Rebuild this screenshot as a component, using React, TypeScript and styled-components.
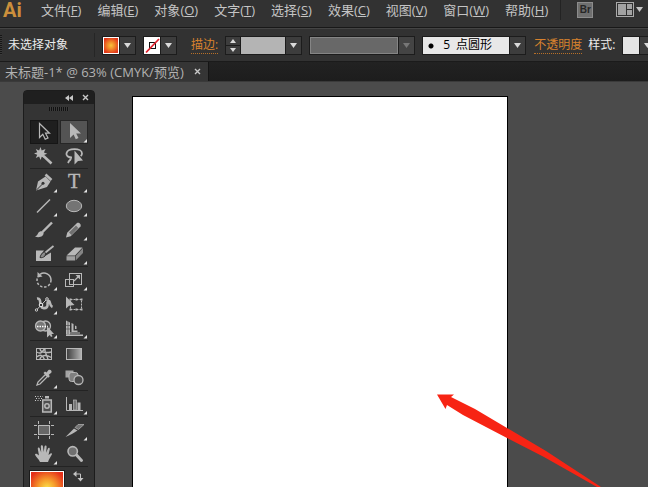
import React from "react";
import styled, { createGlobalStyle, css } from "styled-components";

const GlobalStyle = createGlobalStyle`
  * { box-sizing: border-box; }
  body {
    margin: 0;
    background: #4b4b4b;
    font-family: "Open Sans", "Noto Sans CJK SC", sans-serif;
    color: #c4c4c4;
  }
  button, input, select {
    font: inherit;
    color: inherit;
    margin: 0;
    padding: 0;
    border: 0;
    border-radius: 0;
    background: none;
  }
`;

const Shell = styled.div`
  display: flex;
  flex-direction: column;
  height: 100vh;
  overflow: hidden;
`;

/* ---------- menu bar ---------- */

const MenuBar = styled.header`
  display: flex;
  flex: none;
  align-items: center;
  height: 28px;
  padding-bottom: 8px;
  background: #323232;
  border-bottom: 1px solid #181818;
  white-space: nowrap;
`;

const Logo = styled.span`
  flex: none;
  width: 41px;
  padding-left: 3px;
  font: 700 20px/20px Roboto, sans-serif;
  color: #cb8f3c;
`;

const Menus = styled.nav`
  display: flex;
  flex: none;
  gap: 16px;
`;

const MenuButton = styled.button`
  font-size: 13px;
  line-height: 20px;
`;

const MenuTools = styled.div`
  display: flex;
  flex: none;
  align-items: center;
  gap: 23px;
  margin-left: 12px;
  padding-left: 16px;
  border-left: 1px solid #232323;
  height: 20px;
`;

const BridgeButton = styled.button`
  width: 16px;
  height: 16px;
  background: #6f6f6f;
  border: 1px solid #8c8c8c;
  color: #262626;
  font: 700 10px/12px "Liberation Sans", sans-serif;
`;

const IconButton = styled.button`
  display: flex;
  align-items: center;
  gap: 2px;
`;

/* ---------- control bar ---------- */

const ControlBar = styled.div`
  display: flex;
  flex: none;
  align-items: center;
  height: 34px;
  background: #323232;
  border-top: 1px solid #444;
  border-bottom: 1px solid #1b1b1b;
  font-size: 12px;
  line-height: 16px;
  white-space: nowrap;
  overflow: hidden;
  & > * {
    flex: none;
  }
`;

const Grip = styled.span`
  width: 2px;
  height: 20px;
  margin-right: 6px;
  background: repeating-linear-gradient(#161616 0 1px, #3a3a3a 1px 2px);
`;

const Status = styled.span`
  width: 86px;
  color: #ececec;
`;

const Group = styled.div`
  display: flex;
  align-items: stretch;
  height: 19px;
  margin-left: 7px;
  border: 1px solid #1c1c1c;
`;

const Divider = styled.span`
  width: 1px;
  height: 24px;
  background: #262626;
`;

const Swatch = styled.button<{ $kind: "fill" | "none" | "plain" }>`
  display: flex;
  width: 16px;
  ${(p) =>
    p.$kind === "fill"
      ? css`
          border: 1px solid #fff;
          background: radial-gradient(circle, #f9c13a 0, #f08a28 35%, #e3391b 80%);
        `
      : css`
          background: ${p.$kind === "none" ? "#fff" : "#e4e4e4"};
        `}
`;

const Arrow = styled.button<{ $dim?: boolean }>`
  display: flex;
  flex: none;
  align-items: center;
  justify-content: center;
  width: 16px;
  background: ${(p) => (p.$dim ? "#444" : "#3d3d3d")};
  border-left: 1px solid #1c1c1c;
  color: ${(p) => (p.$dim ? "#777" : "#dadada")};
`;

const Link = styled.a<{ $gap: number }>`
  margin-left: ${(p) => p.$gap}px;
  color: #d8822e;
  text-decoration: none;
  border-bottom: 1px dotted #b87028;
`;

const Spinner = styled.div`
  display: flex;
  flex-direction: column;
  width: 15px;
  background: #3d3d3d;
  border-right: 1px solid #1c1c1c;
  color: #dadada;
`;

const SpinButton = styled.button`
  display: flex;
  flex: 1;
  align-items: center;
  justify-content: center;
  & + & {
    border-top: 1px solid #1c1c1c;
  }
`;

const WeightInput = styled.input`
  width: 44px;
  background: #b4b4b4;
  color: #111;
`;

const ProfileSelect = styled.select`
  appearance: none;
  width: 88px;
  background: #686868;
  border: 1px solid #858585;
  opacity: 1;
`;

const BrushSelect = styled.select`
  appearance: none;
  width: 86px;
  padding-left: 20px;
  background: radial-gradient(circle at 8px 9px, #000 0 2px, #e8e8e8 3px);
  color: #000;
`;

const Label = styled.label`
  margin-left: 6px;
  color: #ececec;
`;

/* ---------- document tabs ---------- */

const Tabs = styled.div`
  display: flex;
  flex: none;
  height: 20px;
  background: linear-gradient(#222, #1d1d1d);
  border-bottom: 1px solid #3a3a3a;
`;

const Tab = styled.div`
  display: flex;
  align-items: center;
  gap: 10px;
  padding: 0 7px 0 5px;
  background: #353535;
  border-right: 1px solid #151515;
  font-size: 13px;
  line-height: 18px;
  color: #b2b2b2;
  white-space: nowrap;
`;

const CloseButton = styled.button`
  display: flex;
  color: #c8c8c8;
`;

/* ---------- workspace ---------- */

const Workspace = styled.main`
  position: relative;
  display: flex;
  flex: 1;
  min-height: 0;
  padding-left: 23px;
  background: #4b4b4b;
`;

const Artboard = styled.section`
  flex: 1;
  margin: 14px 140px 0 37px;
  background: #fff;
  border: 1px solid #000;
  border-bottom: 0;
`;

const Pointer = styled.svg`
  position: absolute;
  left: 436px;
  top: 312px;
`;

const Panel = styled.aside`
  flex: none;
  width: 72px;
  height: 480px;
  margin-top: 8px;
  background: #343434;
  border: 1px solid #1c1c1c;
  border-radius: 4px 4px 0 0;
`;

const PanelHead = styled.div`
  display: flex;
  align-items: center;
  justify-content: flex-end;
  gap: 9px;
  height: 13px;
  padding-right: 5px;
  background: #1f1f1f;
  color: #c4c4c4;
`;

const PanelGrip = styled.div`
  width: 20px;
  height: 4px;
  margin: 3px auto 9px;
  background: repeating-linear-gradient(90deg, #111 0 1px, #3a3a3a 1px 2px);
`;

const ToolGroup = styled.div`
  display: grid;
  grid-template-columns: 28px 28px;
  grid-auto-rows: 24px;
  column-gap: 2px;
  margin: 0 6px;
  & + & {
    border-top: 1px solid #232323;
    padding-top: 1px;
  }
`;

const ToolButton = styled.button<{ $state?: "active" | "hover" }>`
  display: flex;
  color: #b8b8b8;
  ${(p) =>
    p.$state === "active" &&
    css`
      background: #1f1f1f;
      box-shadow: inset 0 0 0 1px #161616;
    `}
  ${(p) =>
    p.$state === "hover" &&
    css`
      background: #545454;
      box-shadow: inset 0 0 0 1px #262626;
    `}
`;

const ColorArea = styled.div`
  display: flex;
  align-items: flex-start;
  gap: 9px;
  margin: 0 6px;
  padding-top: 4px;
  border-top: 1px solid #232323;
`;

const FillButton = styled.button`
  width: 34px;
  height: 34px;
  border: 1px solid #fff;
  outline: 1px solid #1c1c1c;
  background: radial-gradient(circle, #fae04a 0, #f6a02c 35%, #e5301a 85%);
`;

const Down = () => (
  <svg width="7" height="5" aria-hidden="true">
    <path d="M0 0h7L3.500 5z" fill="currentColor" />
  </svg>
);

const Cross = () => (
  <svg width="7" height="7" aria-hidden="true">
    <path d="M1 1l5 5M6 1L1 6" stroke="currentColor" strokeWidth="1.400" />
  </svg>
);

const line = { fill: "none", stroke: "currentColor" } as const;
const solid = { fill: "currentColor" } as const;

type Tool = { name: string; art: React.ReactNode; more?: boolean; state?: "active" | "hover" };

const groups: Tool[][] = [
  [
    {
      name: "选择工具",
      state: "active",
      art: <path d="M9.500 3.500v14l3.300-3.200 2.400 5 2.800-1.300-2.500-4.800h4z" {...line} strokeWidth="1.200" />,
    },
    {
      name: "直接选择工具",
      state: "hover",
      more: true,
      art: <path d="M10 3v15l3.600-3.500 2.200 4.800 2.700-1.200-2.300-4.600H21z" {...solid} />,
    },
    {
      name: "魔棒工具",
      art: (
        <>
          <path d="M10.500 3l1.200 3.600L15.500 5l-1.600 3.400 3.400 1.300-3.400 1.200L15 14l-3.300-1.300L10.600 16l-1.500-3.400L5.800 14l1.400-3.300L4 9.500l3.300-1.300L5.800 5l3.300 1.400z" {...solid} />
          <path d="M13.500 12l8 7.500" {...line} strokeWidth="2.600" />
        </>
      ),
    },
    {
      name: "套索工具",
      art: (
        <>
          <path d="M12 13.500c-4 0-6-2-5.500-4.300.6-2.400 4-4 8-4 4.200 0 7.500 1.600 7.500 4.200 0 1-.5 2-1.300 2.700M9.500 12.500c2 1.500 1.500 3-.5 4.500l-1 2" {...line} strokeWidth="1.800" />
          <path d="M14.500 6.500v14l3.500-3.500 5-.5z" {...solid} />
        </>
      ),
    },
  ],
  [
    {
      name: "钢笔工具",
      more: true,
      art: (
        <>
          <path d="M6 20.500l2-9 7.500-5 5 5-3.500 5.500z" {...solid} />
          <path d="M6.500 20l6-6" stroke="#343434" />
          <circle cx="13" cy="13.300" r="1.500" fill="#343434" />
          <path d="M15.500 4.500l6 5.500" {...line} strokeWidth="2.500" />
        </>
      ),
    },
    {
      name: "文字工具",
      more: true,
      art: (
        <text x="14" y="18" textAnchor="middle" fontFamily="Liberation Serif, serif" fontSize="20" {...solid} stroke="currentColor" strokeWidth=".4">
          T
        </text>
      ),
    },
    { name: "直线段工具", more: true, art: <path d="M7 18.500L20 5.500" {...line} strokeWidth="1.400" /> },
    {
      name: "椭圆工具",
      more: true,
      art: <ellipse cx="14" cy="12" rx="7.700" ry="5.700" fill="#747474" stroke="currentColor" />,
    },
    {
      name: "画笔工具",
      art: (
        <>
          <path d="M12.500 14L22 4.500" {...line} strokeWidth="2.400" />
          <path d="M13.500 14.500c.8 3.500-4 6-8.500 4 3-.6 2.500-4.500 5.500-5.200 1.300-.3 2.500.2 3 1.200z" {...solid} />
        </>
      ),
    },
    {
      name: "铅笔工具",
      more: true,
      art: (
        <>
          <path d="M6 19.500l1.200-4.700L17 5c2-1 4.500 1.200 3.500 3.500l-9.800 9.700z" {...solid} />
          <path d="M9 14.500l7-7 2.300 2.500-6.800 7z" fill="#707070" />
        </>
      ),
    },
    {
      name: "斑点画笔工具",
      art: (
        <>
          <path d="M6 8.500h8l-3 4 2.500 2.500 7.500-4.500v8.500H6z" {...solid} />
          <path d="M10 15.500c1-4 3.500-6 6-5.500l-1 4c-1.500 1.500-3.500 2-5 1.500z" fill="#8a8a8a" stroke="#343434" />
          <path d="M15.500 10.500l8-6.500" {...line} strokeWidth="1.800" />
        </>
      ),
    },
    {
      name: "橡皮擦工具",
      more: true,
      art: (
        <>
          <path d="M6.500 13.500L15 5.500h7.500L15 13.500z" {...solid} />
          <path d="M6.500 14.200H15v4.300H6.500z" fill="#a0a0a0" />
          <path d="M15.700 14l7.300-8v5l-7.300 7.500z" fill="#858585" />
        </>
      ),
    },
  ],
  [
    {
      name: "旋转工具",
      more: true,
      art: (
        <>
          <path d="M10 6.300A7 7 0 0 1 21 12" {...line} strokeWidth="1.500" />
          <path d="M21 12A7 7 0 1 1 8 8.500" {...line} strokeWidth="1.500" strokeDasharray="2.500 1.700" />
          <path d="M7.500 4v5.500l5-1z" {...solid} />
        </>
      ),
    },
    {
      name: "比例缩放工具",
      more: true,
      art: (
        <>
          <rect x="9.500" y="5.500" width="12" height="11" {...line} />
          <rect x="5.500" y="11.500" width="8" height="7" {...line} />
          <path d="M14 13l4.500-4.500" {...line} strokeWidth="1.300" />
          <path d="M15.500 7h4.500v4.500z" {...solid} />
        </>
      ),
    },
    {
      name: "宽度工具",
      more: true,
      art: (
        <>
          <path d="M7 6.500c3.500-.5 3 3 3.500 6 .5 4 4.500 4.500 6.500 2.500 1.500-2-.5-5.500 1.500-6s.5 4.500 4 6" {...line} strokeWidth="2.600" />
          <path d="M6.500 18L16.500 7.500" stroke="#2a2a2a" strokeWidth="2.500" />
          <path d="M6.500 18L16.500 7.500" stroke="#d0d0d0" />
          <circle cx="11" cy="13" r="1.800" fill="#343434" stroke="#eee" />
          <circle cx="17" cy="7" r="1.300" fill="#343434" stroke="#ccc" />
          <circle cx="6.500" cy="18" r="1.200" fill="#343434" stroke="#ccc" />
        </>
      ),
    },
    {
      name: "自由变换工具",
      art: (
        <>
          <rect x="10.500" y="7.500" width="11" height="10" {...line} strokeDasharray="2 1" />
          <path d="M9.500 6.500h2v2h-2zM20.500 6.500h2v2h-2zM20.500 16.500h2v2h-2zM9.500 16.500h2v2h-2zM15.500 6.500h2v2h-2zM15.500 16.500h2v2h-2z" {...solid} />
          <path d="M6 4.500v12l3-2.800 5.500-.7z" {...solid} />
        </>
      ),
    },
    {
      name: "形状生成器工具",
      more: true,
      art: (
        <>
          <circle cx="15.500" cy="10" r="5" fill="#4c4c4c" stroke="currentColor" strokeWidth="1.300" />
          <circle cx="10.500" cy="10" r="5" fill="#777" stroke="currentColor" strokeWidth="1.300" />
          <path d="M7 10.500h11" stroke="#fff" strokeWidth="1.500" strokeDasharray="1.500 1" />
          <path d="M17 10v11.500l2.800-2.500 1.200 2 1.500-.8-1-2.200H24z" {...solid} />
        </>
      ),
    },
    {
      name: "透视网格工具",
      more: true,
      art: (
        <>
          <path d="M6 4.500l4 2v12H6z" {...solid} />
          <path d="M11.500 7l2 1v6.500h4V16h-6zM15 9.500l1.500.8v2.700H15z" {...solid} />
          <path d="M6 16.500h14v1H6zM6 18.500h17V20H6z" {...solid} />
          <path d="M6 9.500h4M6 13h4M8 5v13" stroke="#4c4c4c" strokeWidth=".7" />
        </>
      ),
    },
  ],
  [
    {
      name: "网格工具",
      art: (
        <>
          <rect x="6.500" y="6.500" width="15" height="11" {...line} />
          <path d="M6.500 10c5 3 6-1 8-3.500M6.500 15c4-3 6-2 8 2.500M10 6.500c0 3 3 5 11.500 3.500M10 17.500c0-3 4-6 11.500-2M15 6.500c-1 4 2 6 3 11" {...line} strokeWidth="1.400" />
        </>
      ),
    },
    {
      name: "渐变工具",
      art: (
        <>
          <defs>
            <linearGradient id="ramp">
              <stop offset="0" stopColor="#3c3c3c" />
              <stop offset="1" stopColor="#b4b4b4" />
            </linearGradient>
          </defs>
          <rect x="6.500" y="6.500" width="15" height="11" fill="url(#ramp)" stroke="currentColor" />
        </>
      ),
    },
    {
      name: "吸管工具",
      more: true,
      art: (
        <>
          <path d="M7 19l1-3 7.500-7.500 2 2L10 18z" {...line} strokeWidth="1.300" />
          <path d="M13.500 7l1.500-1.500 1.500 1 2-2.500c1.800-1.200 4 1 2.800 2.800l-2.500 2 1 1.500-1.500 1.500z" {...solid} />
        </>
      ),
    },
    {
      name: "混合工具",
      art: (
        <>
          <rect x="5.500" y="4.500" width="8" height="7" fill="#a5a5a5" />
          <rect x="9" y="6.500" width="9" height="9" rx="2.500" fill="#808080" stroke="currentColor" />
          <circle cx="18.500" cy="14" r="4.500" fill="#4a4a4a" stroke="currentColor" strokeWidth="1.300" />
        </>
      ),
    },
  ],
  [
    {
      name: "符号喷枪工具",
      more: true,
      art: (
        <>
          <path d="M5 4.500h8M6 6.500h7M5 8.500h6" stroke="#ccc" strokeDasharray="1 1.500" />
          <path d="M15 4h4v2.500h-4z" {...solid} />
          <rect x="12.700" y="8" width="8.600" height="12" fill="#505050" stroke="currentColor" strokeWidth="1.500" />
          <circle cx="17" cy="14" r="2.200" {...line} strokeWidth="1.500" />
        </>
      ),
    },
    {
      name: "柱形图工具",
      more: true,
      art: (
        <>
          <path d="M6.500 5v13.500H23" {...line} />
          <path d="M9 12h3v6H9zM17.500 10.500h3V18h-3z" {...solid} />
          <rect x="13.500" y="8" width="3" height="10" fill="#777" stroke="currentColor" strokeWidth=".7" />
        </>
      ),
    },
  ],
  [
    {
      name: "画板工具",
      art: (
        <>
          <rect x="8.500" y="7.500" width="11" height="9" fill="#666" stroke="currentColor" />
          <path d="M4 7.500h3M4 16.500h3M21 7.500h3M21 16.500h3M8.500 3v3M19.500 3v3M8.500 18v3M19.500 18v3" {...line} />
        </>
      ),
    },
    {
      name: "切片工具",
      more: true,
      art: (
        <>
          <path d="M5.500 19L14 10.500l3.500 2C14 15 10 17 5.500 19z" {...solid} />
          <path d="M15 9.500l3-3h6l-5.500 5z" fill="#747474" stroke="currentColor" strokeWidth=".7" />
        </>
      ),
    },
    {
      name: "抓手工具",
      more: true,
      art: (
        <path d="M10 20c-1-3-4-5-5-7.300 0-1.400 2-1.200 4 .8L7.800 7c-.2-1.600 1.500-2 2-.5l1.400 4-.4-6c0-1.600 2-1.600 2.200 0l.7 5.500.8-5.500c.3-1.500 2.200-1.200 2.100.3l-.4 6 1.700-4.300c.7-1.400 2.200-.7 1.900.8L18.500 13l2-1.500c1-.6 2 .3 1.200 1.300L19 17.500 18 20z" {...solid} />
      ),
    },
    {
      name: "缩放工具",
      art: (
        <>
          <path d="M16.500 13l5 5.500" {...line} strokeWidth="3" strokeLinecap="round" />
          <circle cx="12.700" cy="9.300" r="4.700" fill="#707070" stroke="currentColor" strokeWidth="1.600" />
        </>
      ),
    },
  ],
];

const menus: [string, string][] = [
  ["文件", "F"],
  ["编辑", "E"],
  ["对象", "O"],
  ["文字", "T"],
  ["选择", "S"],
  ["效果", "C"],
  ["视图", "V"],
  ["窗口", "W"],
  ["帮助", "H"],
];

export default function App() {
  return (
    <Shell>
      <GlobalStyle />
      <MenuBar>
        <Logo>Ai</Logo>
        <Menus>
          {menus.map(([text, key]) => (
            <MenuButton key={key}>
              {text}(<u>{key}</u>)
            </MenuButton>
          ))}
        </Menus>
        <MenuTools>
          <BridgeButton>Br</BridgeButton>
          <IconButton aria-label="排列文档">
            <svg width="18" height="15" aria-hidden="true">
              <rect x=".5" y=".5" width="17" height="14" fill="#303030" stroke="#aaa" />
              <path d="M2 2h8v11H2zM11 2h5v5h-5zM11 8h5v5h-5z" fill="#a2a2a2" />
            </svg>
            <Down />
          </IconButton>
        </MenuTools>
      </MenuBar>

      <ControlBar>
        <Grip />
        <Status>未选择对象</Status>
        <Divider />
        <Group>
          <Swatch $kind="fill" aria-label="填色" />
          <Arrow aria-label="填色选项"><Down /></Arrow>
        </Group>
        <Group>
          <Swatch $kind="none" aria-label="描边颜色">
            <svg width="16" height="17" aria-hidden="true">
              <rect x="5.500" y="5.500" width="6" height="6" fill="none" stroke="#111" />
              <path d="M2 15.500L15 2" stroke="#e0202c" strokeWidth="1.800" />
            </svg>
          </Swatch>
          <Arrow aria-label="描边颜色选项"><Down /></Arrow>
        </Group>
        <Link href="#stroke" $gap={14}>描边:</Link>
        <Group>
          <Spinner>
            <SpinButton aria-label="增加">
              <svg width="6" height="4" aria-hidden="true"><path d="M0 4h6L3 0z" fill="currentColor" /></svg>
            </SpinButton>
            <SpinButton aria-label="减少">
              <svg width="6" height="4" aria-hidden="true"><path d="M0 0h6L3 4z" fill="currentColor" /></svg>
            </SpinButton>
          </Spinner>
          <WeightInput aria-label="描边粗细" />
          <Arrow aria-label="粗细选项"><Down /></Arrow>
        </Group>
        <Group>
          <ProfileSelect disabled aria-label="变量宽度配置文件" />
          <Arrow $dim aria-label="配置文件选项"><Down /></Arrow>
        </Group>
        <Group>
          <BrushSelect aria-label="画笔定义">
            <option>{"5\u2002点圆形"}</option>
          </BrushSelect>
          <Arrow aria-label="画笔选项"><Down /></Arrow>
        </Group>
        <Link href="#opacity" $gap={8}>不透明度</Link>
        <Label htmlFor="style">样式:</Label>
        <Group>
          <Swatch $kind="plain" id="style" />
          <Arrow aria-label="样式选项"><Down /></Arrow>
        </Group>
      </ControlBar>

      <Tabs>
        <Tab>
          <span>未标题-1* @ 63% (CMYK/预览)</span>
          <CloseButton aria-label="关闭"><Cross /></CloseButton>
        </Tab>
      </Tabs>

      <Workspace>
        <Panel>
          <PanelHead>
            <CloseButton aria-label="折叠">
              <svg width="8" height="6" aria-hidden="true">
                <path d="M4 0v6L0 3zM8 0v6L4 3z" fill="currentColor" />
              </svg>
            </CloseButton>
            <CloseButton aria-label="关闭面板"><Cross /></CloseButton>
          </PanelHead>
          <PanelGrip />
          {groups.map((tools) => (
            <ToolGroup key={tools[0].name}>
              {tools.map((t) => (
                <ToolButton key={t.name} aria-label={t.name} $state={t.state}>
                  <svg width="28" height="24" aria-hidden="true">
                    {t.art}
                    {t.more && <path d="M27 19v3.500h-3.500z" fill="#e4e4e4" />}
                  </svg>
                </ToolButton>
              ))}
            </ToolGroup>
          ))}
          <ColorArea>
            <FillButton aria-label="填色" />
            <IconButton aria-label="互换填色和描边">
              <svg width="12" height="11" aria-hidden="true">
                <path d="M3 3h4.500v5" {...line} />
                <path d="M3.500 0v6L0 3zM4.500 7h6l-3 3.500z" {...solid} />
              </svg>
            </IconButton>
          </ColorArea>
        </Panel>
        <Artboard aria-label="画板" />
        <Pointer width="166" height="94" aria-hidden="true">
          <path d="M1 .5H18L15 3 39 15 71 34 110 57 165 93H161L108 63 71 44 27 21 11 11 9.500 15z" fill="#f72414" />
        </Pointer>
      </Workspace>
    </Shell>
  );
}
